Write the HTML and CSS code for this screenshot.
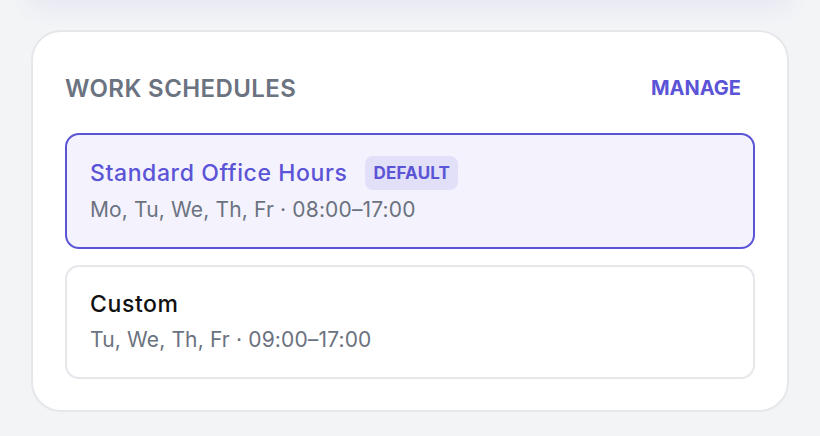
FILE: index.html
```html
<!DOCTYPE html>
<html lang="en">

<head>
  <meta charset="UTF-8">
  <meta name="viewport" content="width=device-width, initial-scale=1.0">
  <title>Work Schedules</title>
  <link rel="stylesheet" href="styles.css">
</head>

<body>
  <div class="page">
    <div class="prev-panel"></div>

    <section class="card">
      <div class="card-header">
        <h2>Work Schedules</h2>
        <button class="manage">Manage</button>
      </div>

      <ul class="schedule-list">
        <li class="schedule active">
          <div class="schedule-title">
            <span class="name">Standard Office Hours</span>
            <span class="badge">Default</span>
          </div>
          <div class="schedule-meta">Mo, Tu, We, Th, Fr · 08:00–17:00</div>
        </li>
        <li class="schedule">
          <div class="schedule-title">
            <span class="name">Custom</span>
          </div>
          <div class="schedule-meta">Tu, We, Th, Fr · 09:00–17:00</div>
        </li>
      </ul>
    </section>
  </div>
</body>

</html>
```

FILE: styles.css
```css
body {
  margin: 0;
  font-family: Inter, "Noto Sans", sans-serif;
  background-color: #f3f4f6;
}

.page {
  padding: 0 31px;
}

/* bottom of the panel above, only its shadow shows */
.prev-panel {
  height: 40px;
  margin-top: -40px;
  margin-bottom: 30px;
  background: #f3f4f6;
  box-shadow: 0 6px 24px rgba(91, 84, 214, 0.09);
}

.card {
  width: 758px;
  box-sizing: border-box;
  background: white;
  border: 2px solid #e5e7eb;
  border-radius: 30px;
  padding: 40px 32px 31px;
}

.card-header {
  display: flex;
  justify-content: space-between;
  align-items: center;
  height: 32px;
  margin-bottom: 29px;
}

.card-header h2 {
  margin: 0;
  font-size: 24px;
  font-weight: 600;
  letter-spacing: 0.4px;
  color: #6b7280;
  text-transform: uppercase;
}

.manage {
  background: none;
  border: none;
  padding: 0 14px;
  font-family: inherit;
  font-size: 20px;
  font-weight: 700;
  color: #5b54d6;
  text-transform: uppercase;
  cursor: pointer;
}

.schedule-list {
  list-style: none;
  margin: 0;
  padding: 0;
  display: flex;
  flex-direction: column;
  gap: 16px;
}

.schedule {
  border: 2px solid #e5e7eb;
  border-radius: 14px;
  padding: 21px 24px 21px 23px;
  background: white;
}

.schedule.active {
  border-color: #5b54d6;
  background: #f4f3fd;
}

.schedule-title {
  display: flex;
  align-items: center;
  gap: 18px;
  min-height: 32px;
}

.name {
  font-size: 23px;
  font-weight: 500;
  letter-spacing: 0.6px;
  color: #111111;
}

.active .name {
  color: #5b54d6;
}

.badge {
  background: #e2e0f8;
  color: #5b54d6;
  font-size: 17px;
  font-weight: 700;
  letter-spacing: 0.2px;
  text-transform: uppercase;
  padding: 0 8px;
  height: 34px;
  line-height: 34px;
  border-radius: 8px;
}

.schedule-meta {
  margin-top: 4px;
  font-size: 21px;
  letter-spacing: 0.15px;
  line-height: 32px;
  color: #6b7280;
}
```
